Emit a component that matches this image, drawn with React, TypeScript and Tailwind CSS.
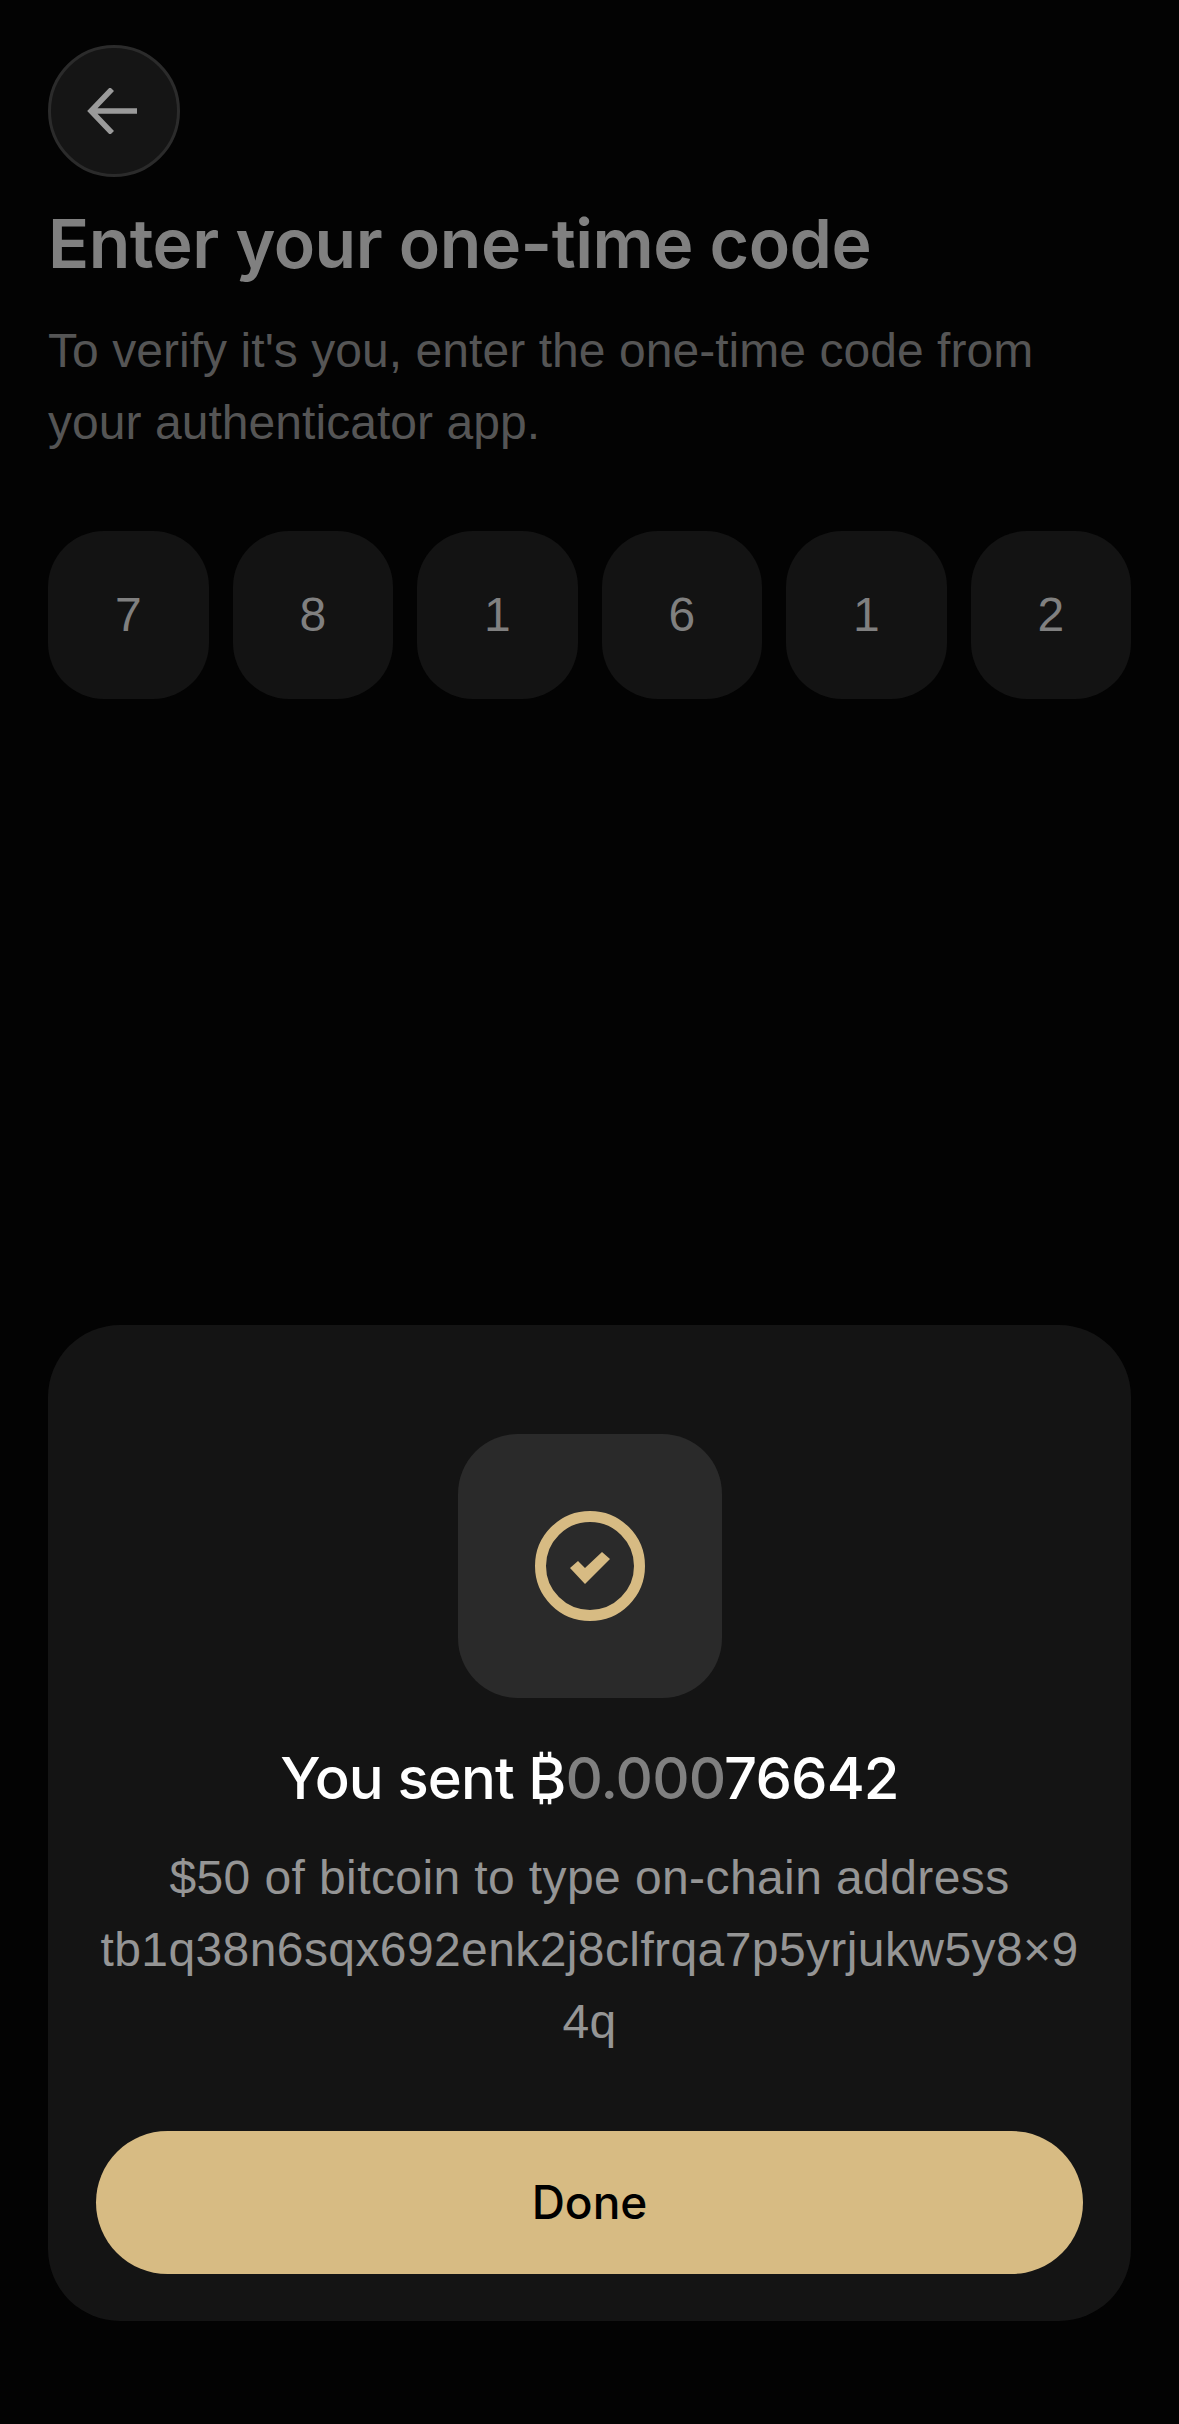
export default function App() {
  const digits = ['7', '8', '1', '6', '1', '2'];
  return (
    <div className="w-[1179px] h-[2424px] bg-[#030303] flex flex-col px-[48px] pt-[45px] pb-[103px] font-['Inter',sans-serif]">
      <div className="w-[132px] h-[132px] rounded-full bg-[#151515] border-[3px] border-[#2b2b2b] flex items-center justify-center shrink-0">
        <svg className="mr-[4px]" width="50" height="46" viewBox="0 0 50 46" fill="none" stroke="#9a9a9a" strokeWidth="5.5">
          <path d="M50 23H4M25 1L4 23l21 22" />
        </svg>
      </div>
      <h1 className="mt-[26px] text-[68px] leading-[80px] font-semibold tracking-[-0.5px] text-[#808080]">Enter your one-time code</h1>
      <p className="mt-[32px] font-['Liberation_Sans',sans-serif] text-[48px] leading-[72px] tracking-[0.05px] text-[#555555]">
        To verify it's you, enter the one-time code from<br />your authenticator app.
      </p>
      <div className="mt-[72px] flex gap-[24px]">
        {digits.map((d, i) => (
          <div key={i} className="flex-1 h-[168px] rounded-[56px] bg-[#131313] flex items-center justify-center font-['Liberation_Sans',sans-serif] text-[48px] text-[#808080]">{d}</div>
        ))}
      </div>
      <div className="mt-auto h-[996px] shrink-0 rounded-[72px] bg-[#141414] px-[48px] pt-[109px] flex flex-col items-center">
        <div className="w-[264px] h-[264px] shrink-0 rounded-[60px] bg-[#2a2a2a] flex items-center justify-center">
          <svg width="110" height="110" viewBox="0 0 110 110" fill="none">
            <circle cx="55" cy="55" r="49.5" stroke="#d7bb83" strokeWidth="11" />
            <polygon points="35,57 43,50 50,57 67,41 75,48 50,73" fill="#d7bb83" />
          </svg>
        </div>
        <div className="mt-[40px] text-[58px] leading-[80px] font-medium tracking-[-0.9px] text-white whitespace-nowrap">
          You sent ₿<span className="text-[#808080]">0.000</span>76642
        </div>
        <p className="mt-[24px] w-full text-center font-['Liberation_Sans',sans-serif] text-[48px] leading-[72px] tracking-[0.4px] text-[#959595] whitespace-nowrap">
          $50 of bitcoin to type on-chain address<br />tb1q38n6sqx692enk2j8clfrqa7p5yrjukw5y8×9<br />4q
        </p>
        <button className="mt-[73px] w-full h-[143px] shrink-0 rounded-full bg-[#d7bb83] text-black text-[46px] font-medium flex items-center justify-center">Done</button>
      </div>
    </div>
  );
}
